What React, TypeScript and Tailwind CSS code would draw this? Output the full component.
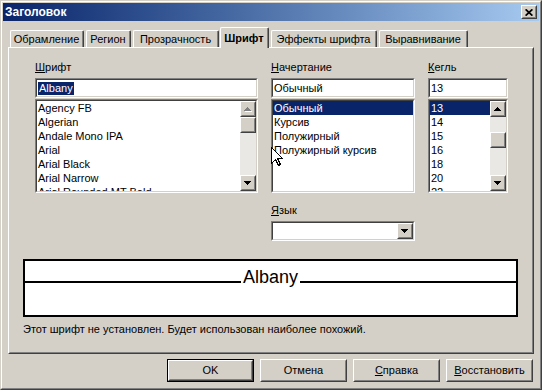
import React from 'react';

const FONT = "font-['Liberation_Sans',Arial,sans-serif]";

type BoxProps = { className?: string; innerClassName?: string; children?: React.ReactNode };

// classic 3D raised frame (buttons, scroll arrows, thumbs)
function Raised({ className = '', innerClassName = '', children }: BoxProps) {
  return (
    <div className={`border border-t-white border-l-white border-r-[#404040] border-b-[#404040] bg-[#d4d0c8] ${className}`}>
      <div className={`h-full w-full border border-t-[#d4d0c8] border-l-[#d4d0c8] border-r-[#808080] border-b-[#808080] flex items-center justify-center ${innerClassName}`}>
        {children}
      </div>
    </div>
  );
}

// classic sunken field (inputs, lists, combo)
function Sunken({ className = '', innerClassName = '', children }: BoxProps) {
  return (
    <div className={`border border-t-[#808080] border-l-[#808080] border-r-white border-b-white ${className}`}>
      <div className={`h-full w-full overflow-hidden border border-t-[#404040] border-l-[#404040] border-r-[#d4d0c8] border-b-[#d4d0c8] bg-white ${innerClassName}`}>
        {children}
      </div>
    </div>
  );
}

const UP = 'M3 0h1v1h1v1h1v1h1v1H0V3h1V2h1V1h1z';
const DOWN = 'M0 0h7v1H6v1H5v1H4v1H3V3H2V2H1V1H0z';

function Arrow({ dir, disabled = false }: { dir: 'up' | 'down'; disabled?: boolean }) {
  const d = dir === 'up' ? UP : DOWN;
  return (
    <svg width="8" height="5" viewBox="0 0 8 5" shapeRendering="crispEdges">
      {disabled && <path d={d} fill="#fff" transform="translate(1 1)" />}
      <path d={d} fill={disabled ? '#808080' : '#000'} />
    </svg>
  );
}

function ScrollBar({ thumbClass, upDisabled = false }: { thumbClass: string; upDisabled?: boolean }) {
  return (
    <div className="flex w-[16px] shrink-0 flex-col bg-[#eae8e4]">
      <Raised className="h-[16px]">
        <Arrow dir="up" disabled={upDisabled} />
      </Raised>
      <div className="flex-1">
        <Raised className={`h-[16px] ${thumbClass}`} />
      </div>
      <Raised className="h-[16px]">
        <Arrow dir="down" />
      </Raised>
    </div>
  );
}

function ListBox({
  items,
  sel,
  scroll,
}: {
  items: string[];
  sel: number;
  scroll?: React.ReactNode;
}) {
  return (
    <Sunken className="mt-px h-[94px]" innerClassName="flex">
      <div className="min-w-0 flex-1 overflow-hidden">
        {items.map((it, i) => (
          <div
            key={it}
            className={`h-[14px] whitespace-nowrap pl-px leading-[14px] ${i === sel ? 'bg-[#0a246a] text-white' : ''}`}
          >
            {it}
          </div>
        ))}
      </div>
      {scroll}
    </Sunken>
  );
}

function Label({ acc, rest }: { acc: string; rest: string }) {
  return (
    <div className="mb-[4px] h-[14px] leading-[14px]">
      <span className="underline">{acc}</span>
      {rest}
    </div>
  );
}

const tabs = [
  { label: 'Обрамление', cls: 'w-[74px]' },
  { label: 'Регион', cls: 'w-[45px] ml-[2px]' },
  { label: 'Прозрачность', cls: 'w-[86px] ml-[2px]' },
  { label: 'Шрифт', cls: 'w-[49px] ml-[1px]', active: true },
  { label: 'Эффекты шрифта', cls: 'w-[106px] ml-[2px]' },
  { label: 'Выравнивание', cls: 'w-[89px] ml-[2px]' },
];

const fonts = [
  'Agency FB',
  'Algerian',
  'Andale Mono IPA',
  'Arial',
  'Arial Black',
  'Arial Narrow',
  'Arial Rounded MT Bold',
];
const styles = ['Обычный', 'Курсив', 'Полужирный', 'Полужирный курсив'];
const sizes = ['13', '14', '15', '16', '18', '20', '22'];

export default function App() {
  return (
    <div
      className={`relative h-[390px] w-[542px] border border-t-[#d4d0c8] border-l-[#d4d0c8] border-r-[#404040] border-b-[#404040] bg-[#d4d0c8] text-[11px] text-black ${FONT}`}
    >
      <div className="flex h-full flex-col border border-t-white border-l-white border-r-[#808080] border-b-[#808080] p-px">
        {/* title bar */}
        <div className="flex h-[18px] items-center bg-linear-to-r from-[#0a246a] to-[#a6caf0] pl-[2px] pr-[2px]">
          <span className="flex-1 text-[12px] font-bold text-white">Заголовок</span>
          <Raised className="h-[14px] w-[16px]">
            <svg width="8" height="7" viewBox="0 0 8 7">
              <path d="M0.6 0.3l6.8 6.4M7.4 0.3L0.6 6.7" stroke="#000" strokeWidth="1.7" />
            </svg>
          </Raised>
        </div>

        {/* tabs */}
        <div className="mt-[6px] flex h-[20px] items-end pl-[7px]">
          {tabs.map((t) =>
            t.active ? (
              <div
                key={t.label}
                className={`relative z-10 -mb-px h-[21px] rounded-t-[2px] border-l border-t border-r border-l-white border-t-white border-r-[#404040] bg-[#d4d0c8] ${t.cls}`}
              >
                <div className="flex h-full items-center justify-center border-r border-r-[#808080] font-bold">
                  {t.label}
                </div>
              </div>
            ) : (
              <div
                key={t.label}
                className={`h-[17px] rounded-t-[2px] border-l border-t border-r border-l-white border-t-white border-r-[#404040] ${t.cls}`}
              >
                <div className="flex h-full items-center justify-center border-r border-r-[#808080]">
                  {t.label}
                </div>
              </div>
            ),
          )}
        </div>

        {/* tab panel */}
        <div className="mx-[5px] h-[307px] border border-t-white border-l-white border-r-[#404040] border-b-[#404040]">
          <div className="flex h-full flex-col border border-t-[#d4d0c8] border-l-[#d4d0c8] border-r-[#808080] border-b-[#808080] pl-[13px] pr-[14px] pt-[11px]">
            <div className="ml-[12px] flex items-start gap-[13px]">
              <div className="w-[223px]">
                <Label acc="Ш" rest="рифт" />
                <Sunken className="h-[20px]" innerClassName="flex items-center pl-[1px]">
                  <span className="bg-[#0a246a] px-px leading-[13px] text-white">Albany</span>
                </Sunken>
                <ListBox
                  items={fonts}
                  sel={-1}
                  scroll={<ScrollBar thumbClass="mt-0" upDisabled />}
                />
              </div>

              <div className="w-[144px]">
                <Label acc="Н" rest="ачертание" />
                <Sunken className="h-[20px]" innerClassName="flex items-center pl-[1px]">
                  Обычный
                </Sunken>
                <ListBox items={styles} sel={0} />
                <div className="mt-[10px]">
                  <Label acc="Я" rest="зык" />
                </div>
                <Sunken className="mt-px h-[20px]" innerClassName="flex justify-end">
                  <Raised className="h-full w-[16px]">
                    <Arrow dir="down" />
                  </Raised>
                </Sunken>
              </div>

              <div className="w-[80px]">
                <Label acc="К" rest="егль" />
                <Sunken className="h-[20px]" innerClassName="flex items-center pl-[1px]">
                  13
                </Sunken>
                <ListBox items={sizes} sel={0} scroll={<ScrollBar thumbClass="mt-[15px]" />} />
              </div>
            </div>

            {/* preview */}
            <div className="mt-[18px] flex h-[58px] flex-col border-2 border-black bg-white">
              <div className="flex h-[33px] items-baseline">
                <div className="h-[2px] flex-1 bg-black" />
                <span className="px-[2px] text-[18px] leading-[33px]">Albany</span>
                <div className="h-[2px] flex-1 bg-black" />
              </div>
            </div>

            <div className="mt-[5px] h-[14px] leading-[14px]">
              Этот шрифт не установлен. Будет использован наиболее похожий.
            </div>
          </div>
        </div>

        {/* buttons */}
        <div className="mt-[5px] flex justify-end gap-[6px] pr-[6px]">
          <div className="h-[23px] w-[87px] border border-black">
            <Raised className="h-full">OK</Raised>
          </div>
          <Raised className="h-[23px] w-[87px]">Отмена</Raised>
          <Raised className="h-[23px] w-[87px]">
            <span>
              <span className="underline">С</span>правка
            </span>
          </Raised>
          <Raised className="h-[23px] w-[87px]">
            <span>
              <span className="underline">В</span>осстановить
            </span>
          </Raised>
        </div>
      </div>

      {/* mouse pointer */}
      <svg className="absolute left-[270px] top-[146px]" width="13" height="20" viewBox="0 0 13 20">
        <path
          d="M0.5 0.5V16.5L4.5 12.5L7.5 18.5L9.5 17.5L6.5 11.5H11.5Z"
          fill="#fff"
          stroke="#000"
          strokeWidth="1"
          shapeRendering="crispEdges"
        />
      </svg>
    </div>
  );
}
